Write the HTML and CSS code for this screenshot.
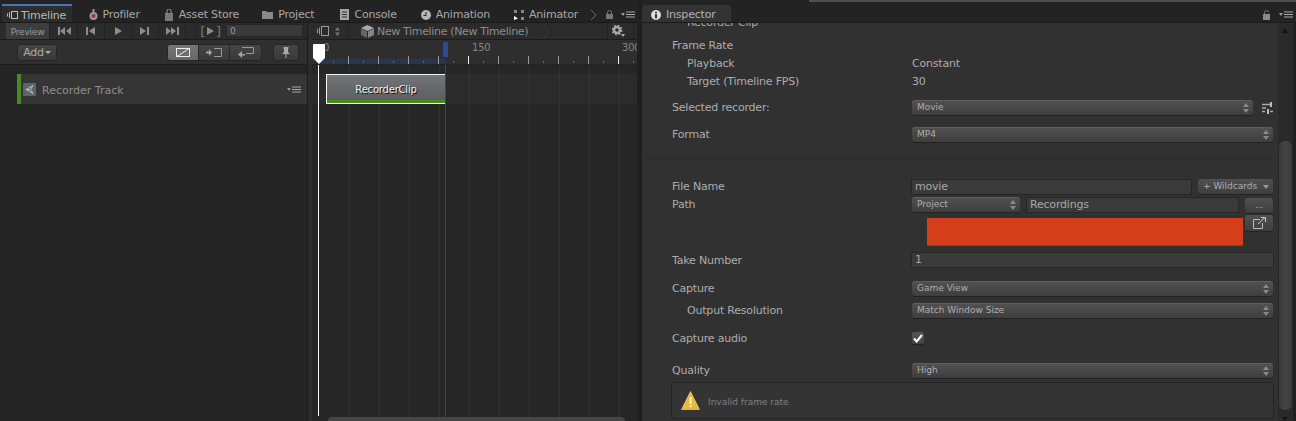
FILE: index.html
```html
<!DOCTYPE html>
<html lang="en">
<head>
    <meta charset="UTF-8">
    <title>Timeline and Inspector</title>
    <link rel="stylesheet" href="styles.css">
</head>
<body>
<div class="editor">

    <section class="timeline-window">
        <div class="tabbar">
            <div class="tab tab-active">
                <svg class="ico" width="11" height="10" viewBox="0 0 11 10"><path d="M.5 3.500v3M2.500 2v6" stroke="#bbb" fill="none"/><rect x="4.500" y="1.500" width="6" height="7" stroke="#bbb" fill="none"/></svg>
                <span>Timeline</span>
            </div>
            <div class="tab">
                <svg class="ico" width="9" height="12" viewBox="0 0 9 12"><circle cx="4.500" cy="7" r="4" fill="#9a9a9a"/><circle cx="4.500" cy="7" r="2" fill="#a33"/><rect x="3.500" y="0" width="2" height="3" fill="#999"/></svg>
                <span>Profiler</span>
            </div>
            <div class="tab">
                <svg class="ico" width="10" height="12" viewBox="0 0 10 12"><rect x="1" y="4" width="8" height="8" fill="#777"/><path d="M3 5V2a2 2 0 0 1 4 0v3" stroke="#999" fill="none"/></svg>
                <span>Asset Store</span>
            </div>
            <div class="tab tab-project">
                <svg class="ico" width="11" height="9" viewBox="0 0 11 9"><path d="M0 1h4l1 1h6v7H0z" fill="#8a8a8a"/></svg>
                <span>Project</span>
            </div>
            <div class="tab tab-console">
                <svg class="ico" width="9" height="11" viewBox="0 0 9 11"><rect width="9" height="11" fill="#a5a5a5"/><path d="M2 3h5M2 5.500h5M2 8h5" stroke="#333"/></svg>
                <span>Console</span>
            </div>
            <div class="tab">
                <svg class="ico" width="10" height="10" viewBox="0 0 10 10"><circle cx="5" cy="5" r="5" fill="#b5b5b5"/><path d="M5 2v3.500H2.500" stroke="#222" fill="none"/></svg>
                <span>Animation</span>
            </div>
            <div class="tab">
                <svg class="ico" width="10" height="11" viewBox="0 0 10 11"><path d="M0 1h3v3H0zM7 1h3v3H7zM7 8h3v3H7z" fill="#888"/><path d="M0 7l4 2.500L0 11z" fill="#fff"/></svg>
                <span>Animator</span>
            </div>
            <div class="tabbar-end">
                <svg width="7" height="12" viewBox="0 0 7 12"><path d="M1 1l5 5-5 5" stroke="#666" fill="none"/></svg>
                <svg class="lock" width="7" height="9" viewBox="0 0 7 9"><rect y="4" width="7" height="5" fill="#777"/><path d="M1.500 4V2.500a2 2 0 0 1 4 0V4" stroke="#777" fill="none"/></svg>
                <svg width="14" height="7" viewBox="0 0 14 7"><path d="M0 2h4L2 5z" fill="#999"/><path d="M5 1h9M5 3.500h9M5 6h9" stroke="#aaa"/></svg>
            </div>
        </div>

        <div class="timeline-body">
            <div class="track-side">
                <div class="transport">
                    <button class="preview">Preview</button>
                    <div class="cell"><svg width="13" height="8" viewBox="0 0 13 8"><path d="M0 0h2v8H0zM7 0v8L2 4zM13 0v8L8 4z" fill="#8c8c8c"/></svg></div>
                    <div class="cell"><svg width="10" height="8" viewBox="0 0 10 8"><path d="M0 0h2v8H0zM9 0v8L3 4z" fill="#8c8c8c"/></svg></div>
                    <div class="cell"><svg width="7" height="8" viewBox="0 0 7 8"><path d="M0 0v8l7-4z" fill="#8c8c8c"/></svg></div>
                    <div class="cell"><svg width="10" height="8" viewBox="0 0 10 8"><path d="M0 0v8l6-4zM7 0h2v8H7z" fill="#8c8c8c"/></svg></div>
                    <div class="cell"><svg width="13" height="8" viewBox="0 0 13 8"><path d="M0 0v8l5-4zM5 0v8l5-4zM11 0h2v8h-2z" fill="#8c8c8c"/></svg></div>
                    <div class="frame-btn">[<svg width="7" height="8" viewBox="0 0 7 8"><path d="M0 0v8l7-4z" fill="#8c8c8c"/></svg>]</div>
                    <div class="frame-input">0</div>
                </div>
                <div class="track-tools">
                    <button class="add-btn">Add<i class="caret"></i></button>
                    <div class="seg">
                        <div class="seg-item seg-on"><svg width="14" height="9" viewBox="0 0 14 9"><rect x=".5" y=".5" width="13" height="8" fill="none" stroke="#eee"/><path d="M1 8.500L13 .5" stroke="#eee"/></svg></div>
                        <div class="seg-item"><svg width="16" height="9" viewBox="0 0 16 9"><path d="M0 3.500h3V1l3 3.500L3 8V5.500H0z" fill="#a5a5a5"/><path d="M8 .5h7.500v8H8" fill="none" stroke="#999"/></svg></div>
                        <div class="seg-item"><svg width="16" height="11" viewBox="0 0 16 11"><path d="M4 .5h11.500v6H8" fill="none" stroke="#999"/><path d="M4 4v3h3v1.500H4V11L0 7.500z" fill="#a5a5a5"/></svg></div>
                    </div>
                    <button class="pin-btn"><svg width="8" height="11" viewBox="0 0 8 11"><path d="M1.500 0h5v1.500H6V5l2 2H4.500v4h-1V7H0l2-2V1.500h-.5z" fill="#aaa"/></svg></button>
                </div>
                <div class="track-list">
                    <div class="track">
                        <svg class="track-ico" width="13" height="13" viewBox="0 0 13 13"><rect width="13" height="13" rx="1" fill="#5b636b"/><path d="M10 2.500L7.500 6.500 10 10.500 3 6.500zM7.500 6.500H3" fill="none" stroke="#b5bcc3"/></svg>
                        <span class="track-name">Recorder Track</span>
                        <svg class="track-menu" width="14" height="7" viewBox="0 0 14 7"><path d="M0 2h4L2 5z" fill="#999"/><path d="M5 1h9M5 3.500h9M5 6h9" stroke="#aaa"/></svg>
                    </div>
                </div>
            </div>

            <div class="sequence">
                <div class="seq-head">
                    <div class="seq-left">
                        <svg width="12" height="10" viewBox="0 0 12 10"><path d="M.5 3v4M2.500 1.500v7" stroke="#999" fill="none"/><rect x="4.500" y=".5" width="7" height="9" stroke="#999" fill="none"/></svg>
                        <svg width="5" height="9" viewBox="0 0 5 9"><path d="M0 3.500h5L2.500 0zM0 5.500h5L2.500 9z" fill="#777"/></svg>
                    </div>
                    <div class="crumb">
                        <svg width="13" height="13" viewBox="0 0 13 13"><path d="M6.500 0L13 3 6.500 6 0 3z" fill="#aaa"/><path d="M0 3.500l6 3V13l-6-3z" fill="#666"/><path d="M13 3.500l-6 3V13l6-3z" fill="#858585"/></svg>
                        <span>New Timeline (New Timeline)</span>
                        <svg class="crumb-arrow" width="6" height="15" viewBox="0 0 6 15"><path d="M0 0l6 7.500L0 15" fill="none" stroke="#3b3b3b"/></svg>
                    </div>
                    <div class="gear">
                        <svg width="13" height="12" viewBox="0 0 13 12"><circle cx="5" cy="5" r="3" fill="none" stroke="#aaa" stroke-width="2.500"/><circle cx="5" cy="5" r="4.800" fill="none" stroke="#aaa" stroke-width="1.400" stroke-dasharray="1.800 1.970"/><path d="M9 9h4l-2 3z" fill="#aaa"/></svg>
                    </div>
                </div>
                <div class="ruler">
                    <span class="ruler-num ruler-0">0</span>
                    <span class="ruler-num ruler-150">150</span>
                    <span class="ruler-num ruler-300">300</span>
                    <div class="ruler-range"></div>
                    <div class="ruler-ticks"></div>
                    <div class="end-mark"></div>
                </div>
                <div class="canvas">
                    <div class="canvas-band"></div>
                    <div class="clip"><span>RecorderClip</span></div>
                    <div class="end-line"></div>
                    <div class="playhead-line"></div>
                </div>
                <svg class="playhead" width="12" height="20" viewBox="0 0 12 20"><path d="M1 0h10a1 1 0 0 1 1 1v13l-6 6-6-6V1a1 1 0 0 1 1-1z" fill="#fff"/></svg>
                <div class="hscroll"></div>
            </div>
        </div>
    </section>

    <section class="inspector-window">
        <div class="tabbar tabbar-insp">
            <div class="insp-tab">
                <svg width="10" height="10" viewBox="0 0 10 10"><circle cx="5" cy="5" r="5" fill="#ddd"/><rect x="4" y="4.200" width="2" height="4" fill="#333"/><rect x="4" y="1.800" width="2" height="1.500" fill="#333"/></svg>
                <span>Inspector</span>
            </div>
            <div class="tabbar-end">
                <svg class="lock" width="8" height="10" viewBox="0 0 8 10"><rect y="4" width="7" height="6" fill="#8a8a8a"/><path d="M1.500 4V2.500a2 2 0 0 1 4 0" stroke="#777" fill="none"/></svg>
                <svg width="14" height="7" viewBox="0 0 14 7"><path d="M0 2h4L2 5z" fill="#999"/><path d="M5 1h9M5 3.500h9M5 6h9" stroke="#aaa"/></svg>
            </div>
        </div>
        <div class="insp-body">
            <div class="insp-scroll">
                <div class="clipped-title">Recorder Clip</div>
                <div class="row"><label>Frame Rate</label></div>
                <div class="row"><label class="sub">Playback</label><span>Constant</span></div>
                <div class="row"><label class="sub">Target (Timeline FPS)</label><span>30</span></div>
                <div class="row row-selected">
                    <label>Selected recorder:</label>
                    <div class="with-icon">
                        <div class="dropdown">Movie</div>
                        <svg width="11" height="12" viewBox="0 0 11 12"><path d="M0 2.500h8M0 6h4M0 9.500h3M8 9.500h3" stroke="#aaa" stroke-width="1.500"/><rect x="8" y="0" width="2" height="5" fill="#bbb"/><rect x="5" y="7" width="2" height="5" fill="#bbb"/></svg>
                    </div>
                </div>
                <div class="row row-format"><label>Format</label><div class="dropdown">MP4</div></div>
                <div class="sep"></div>
                <div class="row row-file">
                    <label>File Name</label>
                    <div class="file-fields">
                        <div class="textfield">movie</div>
                        <div class="wild-btn">+ Wildcards<i class="caret-sm"></i></div>
                    </div>
                </div>
                <div class="row-path">
                    <label>Path</label>
                    <div class="path-fields">
                        <div class="dropdown dropdown-project">Project</div>
                        <div class="textfield">Recordings</div>
                        <div class="path-btns">
                            <div class="small-btn">...</div>
                            <div class="small-btn small-btn-open"><svg width="13" height="12" viewBox="0 0 13 12"><path d="M7 2.500H.5v9h9V6" fill="none" stroke="#bbb"/><path d="M5 7l7-6.500M8 .5h4.500V5" fill="none" stroke="#ccc"/></svg></div>
                        </div>
                    </div>
                </div>
                <div class="row row-take"><label>Take Number</label><div class="textfield">1</div></div>
                <div class="row row-capture"><label>Capture</label><div class="dropdown">Game View</div></div>
                <div class="row row-output"><label class="sub">Output Resolution</label><div class="dropdown">Match Window Size</div></div>
                <div class="row row-audio">
                    <label>Capture audio</label>
                    <div class="checkbox"><svg width="10" height="9" viewBox="0 0 10 9"><path d="M1 4.500L3.700 7.500 9 1" fill="none" stroke="#fff" stroke-width="2"/></svg></div>
                </div>
                <div class="row row-quality"><label>Quality</label><div class="dropdown">High</div></div>
                <div class="helpbox">
                    <svg width="19" height="19" viewBox="0 0 19 19"><path d="M9.500 0.500L18.500 18.500H.5z" fill="#e8b93a" stroke="#f6dc8a" stroke-width=".6"/><rect x="8.700" y="6" width="1.800" height="7" fill="#fff6d8"/><rect x="8.700" y="14.200" width="1.800" height="2" fill="#fff6d8"/></svg>
                    <span>Invalid frame rate</span>
                </div>
            </div>
            <div class="vscroll">
                <i class="vs-up"></i>
                <div class="vs-thumb"></div>
                <i class="vs-down"></i>
            </div>
            <div class="redact"></div>
        </div>
    </section>
</div>
</body>
</html>
```

FILE: styles.css
```css
* { box-sizing: border-box; }
html, body {
    margin: 0;
    padding: 0;
    height: 100%;
    overflow: hidden;
    background: #222;
}
body, button {
    font-family: "DejaVu Sans", sans-serif;
    font-size: 11px;
    letter-spacing: -0.2px;
    color: #adadad;
}
button { padding: 0; }

.editor {
    display: flex;
    width: 1296px;
    height: 421px;
    background: #1f1f1f;
}
.timeline-window {
    width: 638px;
    display: flex;
    flex-direction: column;
    flex-shrink: 0;
}
.inspector-window {
    flex: 1;
    margin-left: 4px;
    display: flex;
    flex-direction: column;
    min-width: 0;
}

/* tabs */
.tabbar {
    height: 23px;
    display: flex;
    align-items: flex-end;
    background: #232323;
    border-bottom: 1px solid #1a1a1a;
    flex-shrink: 0;
}
.tab {
    display: flex;
    align-items: center;
    gap: 5px;
    height: 17px;
    padding: 2px 12px 0;
    color: #a8a8a8;
    white-space: nowrap;
}
.tab .ico { flex-shrink: 0; }
.tab-active {
    width: 76px;
    margin: 0 5px 0 2px;
    padding: 2px 0 0 5px;
    gap: 3px;
    background: #2c2c2c;
    border-top: 1px solid #4a72b8;
    box-shadow: 0 -1px 0 #4a72b8;
    color: #b8b8b8;
}
.tab-project { margin-left: -1px; }
.tab-console { margin-left: 2px; }
.tabbar-end {
    margin-left: auto;
    height: 17px;
    display: flex;
    align-items: center;
    gap: 8px;
    padding: 2px 3px 0 0;
}
.lock { margin-left: 1px; }

/* timeline */
.timeline-body {
    flex: 1;
    display: flex;
    min-height: 0;
}
.track-side {
    width: 308px;
    display: flex;
    flex-direction: column;
    flex-shrink: 0;
    border-right: 1px solid #1a1a1a;
}
.transport {
    height: 17px;
    display: flex;
    align-items: stretch;
    background: #2b2b2b;
    border-bottom: 1px solid #1c1c1c;
    padding-left: 6px;
}
.preview {
    width: 44px;
    margin-right: 1px;
    padding-top: 1px;
    background: #3d3d3d;
    border: 0;
    border-right: 1px solid #222;
    color: #9a9a9a;
    font-size: 9px;
}
.cell {
    width: 27px;
    display: flex;
    align-items: center;
    justify-content: center;
    border-right: 1px solid #222;
}
.frame-btn {
    width: 28px;
    margin-left: 10px;
    display: flex;
    align-items: center;
    justify-content: center;
    gap: 2px;
    font-size: 13px;
    color: #777;
    border-left: 1px solid #222;
}
.frame-input {
    width: 77px;
    margin: 1px 0 2px 2px;
    padding-left: 3px;
    font-size: 9px;
    line-height: 13px;
    color: #999;
    background: #3a3a3a;
    border: 1px solid #262626;
}
.track-tools {
    height: 25px;
    display: flex;
    align-items: center;
    padding-left: 17px;
    background: #2f2f2f;
    border-bottom: 1px solid #1c1c1c;
}
.add-btn {
    width: 40px;
    height: 17px;
    display: flex;
    align-items: center;
    justify-content: center;
    gap: 1px;
    color: #aaa;
    background: linear-gradient(#454545, #393939);
    border: 1px solid #262626;
    border-radius: 3px;
}
.caret {
    width: 0;
    height: 0;
    border: 3px solid transparent;
    border-top: 3px solid #aaa;
    border-bottom: 0;
}
.seg {
    display: flex;
    margin-left: 110px;
    height: 17px;
    border: 1px solid #262626;
    border-radius: 3px;
    overflow: hidden;
}
.seg-item {
    width: 31px;
    display: flex;
    align-items: center;
    justify-content: center;
    background: linear-gradient(#454545, #393939);
    border-right: 1px solid #262626;
}
.seg-item:last-child { border-right: 0; }
.seg-on { background: linear-gradient(#777, #676767); }
.pin-btn {
    width: 26px;
    height: 17px;
    margin-left: 11px;
    display: flex;
    align-items: center;
    justify-content: center;
    background: linear-gradient(#454545, #393939);
    border: 1px solid #262626;
    border-radius: 3px;
}
.track-list {
    flex: 1;
    padding: 9px 0 0 17px;
    background: #252525;
}
.track {
    height: 30px;
    display: flex;
    align-items: center;
    padding-left: 5px;
    background: #353535;
    border-left: 4px solid #4a8a22;
}
.track-ico { margin-left: -3px; }
.track-name {
    margin-left: 6px;
    padding-top: 2px;
    letter-spacing: 0;
    color: #8f8f8f;
}
.track-menu { margin-left: auto; margin-right: 6px; }

.sequence {
    position: relative;
    width: 329px;
    display: flex;
    flex-direction: column;
    overflow: hidden;
    border-left: 4px solid #2c2c2c;
}
.seq-head {
    height: 17px;
    display: flex;
    align-items: center;
    background: #2b2b2b;
    border-bottom: 1px solid #1c1c1c;
}
.seq-left {
    width: 36px;
    height: 100%;
    display: flex;
    align-items: center;
    gap: 6px;
    padding-left: 5px;
    border-right: 1px solid #222;
}
.crumb {
    display: flex;
    align-items: center;
    gap: 3px;
    padding: 1px 0 0 13px;
    font-size: 11px;
    letter-spacing: -0.35px;
    color: #8d8d8d;
    white-space: nowrap;
}
.crumb-arrow { margin-left: 12px; }
.gear {
    margin-left: auto;
    width: 27px;
    height: 100%;
    display: flex;
    align-items: center;
    padding-left: 4px;
    margin-right: 3px;
    border-left: 1px solid #222;
    border-right: 1px solid #222;
}
.ruler {
    position: relative;
    height: 25px;
    background: #2e2e2e;
    border-bottom: 1px solid #222;
}
.ruler-num {
    position: absolute;
    top: 2px;
    font-size: 10px;
    color: #858585;
}
.ruler-0 { left: 11px; }
.ruler-150 { left: 160px; }
.ruler-300 { left: 310px; }
.ruler-range {
    position: absolute;
    left: 6px;
    top: 19px;
    width: 128px;
    height: 5px;
    background: #2a3650;
}
.ruler-ticks {
    position: absolute;
    left: 6px;
    right: 0;
    top: 16px;
    height: 8px;
    background:
        repeating-linear-gradient(90deg, #f0f0f0 0 1px, transparent 1px 150px) 150px 0 / auto 8px no-repeat,
        repeating-linear-gradient(90deg, #999 0 1px, transparent 1px 30px) 30px 0 / auto 8px no-repeat,
        repeating-linear-gradient(90deg, #666 0 1px, transparent 1px 15px) 15px 5px / auto 2px no-repeat;
}
.ruler-150, .ruler-300 { z-index: 1; }
.end-mark {
    position: absolute;
    left: 131px;
    top: 2px;
    width: 5px;
    height: 15px;
    background: #2f4a94;
}
.canvas {
    position: relative;
    flex: 1;
    background:
        repeating-linear-gradient(90deg, #313131 0 1px, transparent 1px 30px) 37px 0 no-repeat,
        #262626;
}
.canvas-band {
    position: absolute;
    left: 0;
    right: 0;
    top: 9px;
    height: 30px;
    background: rgba(255, 255, 255, 0.025);
}
.clip {
    position: absolute;
    left: 14px;
    top: 9px;
    width: 120px;
    height: 30px;
    display: flex;
    align-items: center;
    justify-content: center;
    color: #f0f0f0;
    font-size: 10px;
    text-shadow: 1px 1px 0 #111;
    background: linear-gradient(#737678, #5b5e62 88%, #4b8a1f 88%);
    border: 1px solid #f4f4f4;
}
.end-line {
    position: absolute;
    left: 133px;
    top: 0;
    bottom: 0;
    width: 1px;
    background: #34476f;
}
.playhead-line {
    position: absolute;
    left: 6px;
    top: 0;
    bottom: 5px;
    width: 1px;
    background: #fff;
}
.playhead {
    position: absolute;
    left: 1px;
    top: 21px;
}
.hscroll {
    position: absolute;
    left: 16px;
    right: 12px;
    bottom: 0;
    height: 4px;
    background: #454545;
    border-radius: 5px 5px 0 0;
}

/* inspector */
.tabbar-insp {
    background: linear-gradient(#544e48, #544e48) 167px 0 / 100% 2px no-repeat, #232323;
}
.insp-tab {
    display: flex;
    align-items: center;
    gap: 5px;
    width: 89px;
    height: 17px;
    padding: 2px 0 0 9px;
    color: #b4b4b4;
    background: #333;
    border-radius: 3px 3px 0 0;
}
.insp-body {
    position: relative;
    flex: 1;
    display: flex;
    background: #313131;
    min-height: 0;
    overflow: hidden;
}
.insp-scroll {
    width: 637px;
    padding: 0 0 0 30px;
}
.clipped-title {
    position: relative;
    height: 8px;
    line-height: 0;
    padding-left: 15px;
    color: #a8a8a8;
    overflow: hidden;
}
.clipped-title::before {
    content: "";
    position: absolute;
    left: -7px;
    top: 0;
    border: 2px solid transparent;
    border-top: 3px solid #666;
    border-bottom: 0;
}
.row {
    height: 18px;
    display: grid;
    grid-template-columns: 240px 361px;
    align-items: center;
}
.row:nth-child(2) { margin-top: 5px; }
.row .sub { padding-left: 15px; }
.row-selected { margin-top: 9px; height: 17px; }
.row-format { margin-top: 10px; height: 17px; }
.sep {
    height: 1px;
    margin: 15px 2px 19px -26px;
    background: #2b2b2b;
}
.row-file { height: 17px; }
.row-take { margin-top: 20px; height: 16px; }
.row-capture { margin-top: 12px; height: 16px; }
.row-output { margin-top: 6px; height: 16px; }
.row-audio { margin-top: 12px; height: 16px; }
.row-quality { margin-top: 16px; height: 16px; }

.dropdown {
    position: relative;
    height: 15px;
    line-height: 12px;
    padding-left: 5px;
    font-size: 9px;
    letter-spacing: 0;
    color: #adadad;
    background: linear-gradient(#505050, #3e3e3e);
    border-radius: 3px;
    box-shadow: 0 1px 0 #222;
    border-top: 1px solid #5f5f5f;
}
.dropdown::before, .dropdown::after {
    content: "";
    position: absolute;
    right: 4px;
    border: 3px solid transparent;
}
.dropdown::before {
    top: 2px;
    border-bottom: 4px solid #8a8a8a;
    border-top: 0;
}
.dropdown::after {
    top: 8px;
    border-top: 4px solid #8a8a8a;
    border-bottom: 0;
}
.with-icon {
    display: flex;
    align-items: center;
    gap: 9px;
}
.with-icon .dropdown { flex: 1; }
.textfield {
    height: 16px;
    line-height: 14px;
    padding-left: 3px;
    color: #a8a8a8;
    background: #3a3a3a;
    border: 1px solid #262626;
    font-size: 11px;
}
.file-fields {
    display: flex;
    gap: 6px;
    margin-left: -1px;
}
.file-fields .textfield { width: 281px; }
.wild-btn {
    position: relative;
    width: 75px;
    height: 15px;
    line-height: 14px;
    padding-left: 5px;
    font-size: 9px;
    letter-spacing: 0;
    background: linear-gradient(#505050, #3e3e3e);
    border-radius: 3px;
    box-shadow: 0 1px 0 #222;
}
.caret-sm {
    position: absolute;
    right: 4px;
    top: 6px;
    width: 0;
    height: 0;
    border: 3px solid transparent;
    border-top: 4px solid #999;
    border-bottom: 0;
}
.row-path {
    margin-top: 2px;
    height: 35px;
    display: grid;
    grid-template-columns: 240px 361px;
}
.row-path label { line-height: 16px; }
.path-fields {
    display: flex;
    gap: 6px;
    align-items: flex-start;
}
.dropdown-project { width: 108px; }
.path-fields .textfield { width: 213px; height: 16px; }
.path-btns {
    width: 28px;
    display: flex;
    flex-direction: column;
    gap: 2px;
    margin-top: 1px;
}
.small-btn {
    height: 15px;
    text-align: center;
    line-height: 14px;
    font-size: 9px;
    background: linear-gradient(#505050, #3e3e3e);
    border-radius: 3px;
    box-shadow: 0 1px 0 #222;
}
.small-btn-open {
    height: 16px;
    display: flex;
    align-items: center;
    justify-content: center;
}
.row-take .textfield { margin-left: -1px; width: 363px; }
.checkbox {
    width: 12px;
    height: 12px;
    display: flex;
    align-items: center;
    justify-content: center;
    background: linear-gradient(#555, #424242);
    border-radius: 2px;
    box-shadow: 0 1px 0 #222;
}
.helpbox {
    display: flex;
    align-items: center;
    gap: 8px;
    width: 603px;
    height: 37px;
    margin: 4px 0 0 -1px;
    padding-left: 9px;
    font-size: 9px;
    letter-spacing: 0;
    color: #808080;
    background: #343434;
    border: 1px solid #232323;
    border-radius: 3px;
}
.helpbox span { padding-top: 2px; }
.vscroll {
    position: absolute;
    left: 636px;
    top: 0;
    bottom: 0;
    width: 15px;
    background: #2a2a2a;
    box-shadow: 3px 0 0 #1f1f1f;
}
.vs-up {
    position: absolute;
    left: 4px;
    top: 5px;
    border: 3px solid transparent;
    border-bottom: 5px solid #141414;
    border-top: 0;
}
.vs-thumb {
    position: absolute;
    left: 0;
    top: 117px;
    width: 15px;
    height: 271px;
    background: linear-gradient(90deg, #3a3a3a, #454545 50%, #3a3a3a);
    border-radius: 7px;
    border: 1px solid #262626;
}
.vs-down {
    position: absolute;
    left: 4px;
    top: 394px;
    border: 3px solid transparent;
    border-top: 4px solid #141414;
    border-bottom: 0;
}
.redact {
    position: absolute;
    left: 285px;
    top: 195px;
    width: 316px;
    height: 27px;
    background: #d43e1b;
    box-shadow: 0 1px 0 #a83016;
}
```
